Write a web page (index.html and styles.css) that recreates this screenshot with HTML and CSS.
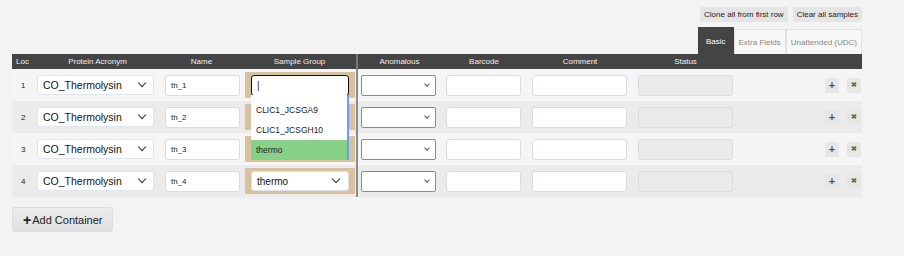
FILE: index.html
```html
<!DOCTYPE html>
<html lang="en">
<head>
  <meta charset="UTF-8">
  <title>Sample Changer</title>
  <link rel="stylesheet" href="styles.css">
</head>
<body>
  <div class="page">
    <div class="toolbar">
      <button class="small-btn">Clone all from first row</button>
      <button class="small-btn">Clear all samples</button>
    </div>

    <div class="tabs">
      <div class="tab active">Basic</div>
      <div class="tab">Extra Fields</div>
      <div class="tab">Unattended (UDC)</div>
    </div>

    <div class="sample-table">
      <div class="row head">
        <div class="cell loc">Loc</div>
        <div class="cell">Protein Acronym</div>
        <div class="cell">Name</div>
        <div class="cell">Sample Group</div>
        <div class="sep"></div>
        <div class="cell">Anomalous</div>
        <div class="cell">Barcode</div>
        <div class="cell">Comment</div>
        <div class="cell">Status</div>
        <div class="cell"></div>
      </div>

      <div class="row">
        <div class="cell loc">1</div>
        <div class="cell"><div class="protein">CO_Thermolysin<span class="chev"></span></div></div>
        <div class="cell"><div class="text-in">th_1</div></div>
        <div class="cell group">
          <div class="group-box"><div class="group-in focused"><span class="caret">|</span></div></div>
          <div class="dropdown">
            <div class="opt">CLIC1_JCSGA9</div>
            <div class="opt">CLIC1_JCSGH10</div>
            <div class="opt picked">thermo</div>
          </div>
        </div>
        <div class="sep"></div>
        <div class="cell"><div class="anom"><span class="chev small"></span></div></div>
        <div class="cell"><div class="text-in"></div></div>
        <div class="cell"><div class="text-in wide"></div></div>
        <div class="cell"><div class="text-in wide status"></div></div>
        <div class="cell actions"><span class="act">+</span><span class="act x">&#x2716;</span></div>
      </div>

      <div class="row alt">
        <div class="cell loc">2</div>
        <div class="cell"><div class="protein">CO_Thermolysin<span class="chev"></span></div></div>
        <div class="cell"><div class="text-in">th_2</div></div>
        <div class="cell group"><div class="group-box"></div></div>
        <div class="sep"></div>
        <div class="cell"><div class="anom"><span class="chev small"></span></div></div>
        <div class="cell"><div class="text-in"></div></div>
        <div class="cell"><div class="text-in wide"></div></div>
        <div class="cell"><div class="text-in wide status"></div></div>
        <div class="cell actions"><span class="act">+</span><span class="act x">&#x2716;</span></div>
      </div>

      <div class="row">
        <div class="cell loc">3</div>
        <div class="cell"><div class="protein">CO_Thermolysin<span class="chev"></span></div></div>
        <div class="cell"><div class="text-in">th_3</div></div>
        <div class="cell group"><div class="group-box"></div></div>
        <div class="sep"></div>
        <div class="cell"><div class="anom"><span class="chev small"></span></div></div>
        <div class="cell"><div class="text-in"></div></div>
        <div class="cell"><div class="text-in wide"></div></div>
        <div class="cell"><div class="text-in wide status"></div></div>
        <div class="cell actions"><span class="act">+</span><span class="act x">&#x2716;</span></div>
      </div>

      <div class="row alt">
        <div class="cell loc">4</div>
        <div class="cell"><div class="protein">CO_Thermolysin<span class="chev"></span></div></div>
        <div class="cell"><div class="text-in">th_4</div></div>
        <div class="cell group"><div class="group-box"><div class="group-in">thermo<span class="chev"></span></div></div></div>
        <div class="sep"></div>
        <div class="cell"><div class="anom"><span class="chev small"></span></div></div>
        <div class="cell"><div class="text-in"></div></div>
        <div class="cell"><div class="text-in wide"></div></div>
        <div class="cell"><div class="text-in wide status"></div></div>
        <div class="cell actions"><span class="act">+</span><span class="act x">&#x2716;</span></div>
      </div>
    </div>

    <button class="add-btn"><b>+</b>Add Container</button>
  </div>
</body>
</html>
```

FILE: styles.css
```css
body {
  margin: 0;
  background: #f3f3f3;
  font-family: "Liberation Sans", Arial, sans-serif;
  color: #222;
}

.page {
  width: 850px;
  padding: 7px 12px;
}

.toolbar {
  display: flex;
  justify-content: flex-end;
  gap: 5px;
  height: 20px;
}

.small-btn {
  height: 15px;
  padding: 0 4px;
  border: none;
  border-radius: 2px;
  background: #e4e4e4;
  font-family: inherit;
  font-size: 8px;
  color: #222;
}

.tabs {
  display: flex;
  justify-content: flex-end;
  height: 27px;
}

.tab {
  display: flex;
  align-items: center;
  padding: 0 4px;
  margin-top: 2px;
  font-size: 8px;
  color: #888;
  background: #f7f7f7;
  border: 1px solid #e2e2e2;
  border-bottom: none;
}

.tab.active {
  margin-top: 0;
  padding: 0 7px;
  background: #444;
  color: #fff;
  border-color: #444;
}

.row {
  display: grid;
  grid-template-columns: 23px 125px 83px 113px 2px 83px 86px 106px 105px 1fr;
  height: 32px;
  background: #f5f5f5;
}

.row.alt {
  background: #ebebeb;
}

.row.head {
  height: 15px;
  background: #444;
  color: #eee;
  font-size: 8px;
}

.head .cell {
  justify-content: center;
}

.head .cell.loc {
  justify-content: flex-start;
}

.cell {
  display: flex;
  align-items: center;
  position: relative;
}

.cell.loc {
  font-size: 8px;
}

.row .cell.loc {
  padding-left: 9px;
}

.row.head .cell.loc {
  padding-left: 4px;
}

.sep {
  background: #8a8a8a;
}

.head .sep {
  background: #777;
}

.protein {
  display: flex;
  align-items: center;
  justify-content: space-between;
  box-sizing: border-box;
  width: 117px;
  height: 20px;
  margin-left: 2px;
  padding: 0 8px 0 5px;
  background: #fff;
  border: 1px solid #e2e6ea;
  border-radius: 3px;
  font-size: 10.5px;
  color: #111;
}

.chev {
  width: 5px;
  height: 5px;
  border-right: 1.2px solid #333;
  border-bottom: 1.2px solid #333;
  transform: rotate(45deg);
  margin-top: -4px;
}

.chev.small {
  width: 3px;
  height: 3px;
  border-color: #555;
  border-width: 1px;
  margin-top: -2px;
}

.text-in {
  box-sizing: border-box;
  width: 75px;
  height: 21px;
  margin-left: 5px;
  padding-left: 5px;
  display: flex;
  align-items: center;
  background: #fff;
  border: 1px solid #d6dde5;
  border-radius: 3px;
  font-size: 8px;
}

.text-in.wide {
  width: 95px;
}

.text-in.status {
  background: #ebebeb;
}

.cell.group {
  padding-left: 2px;
}

.group-box {
  display: flex;
  align-items: center;
  box-sizing: border-box;
  width: 110px;
  height: 26px;
  padding: 0 6px;
  background: #d8c19f;
}

.group-in {
  display: flex;
  align-items: center;
  justify-content: space-between;
  box-sizing: border-box;
  width: 98px;
  height: 20px;
  padding: 0 9px 0 5px;
  background: #fff;
  border: 1px solid #e0e0e0;
  border-radius: 3px;
  font-size: 10px;
  color: #111;
}

.group-in.focused {
  height: 21px;
  border: 1.5px solid #111;
  font-weight: 300;
}

.caret {
  color: #333;
}

.dropdown {
  position: absolute;
  left: 8px;
  top: 26px;
  z-index: 2;
  box-sizing: border-box;
  width: 98px;
  padding-top: 5px;
  background: #fff;
  border-right: 2px solid #6b9ef0;
  font-size: 8.5px;
}

.opt {
  height: 20px;
  line-height: 20px;
  padding-left: 5px;
}

.opt.picked {
  background: #87d087;
}

.anom {
  display: flex;
  align-items: center;
  justify-content: flex-end;
  box-sizing: border-box;
  width: 75px;
  height: 21px;
  margin-left: 3px;
  padding-right: 6px;
  background: #fff;
  border: 1px solid #8a8a8a;
  border-radius: 2px;
}

.actions {
  justify-content: flex-end;
  gap: 8px;
  padding-right: 1px;
}

.act {
  display: flex;
  align-items: center;
  justify-content: center;
  width: 14px;
  height: 15px;
  background: #e6e6e6;
  border-radius: 2px;
  font-size: 11px;
  font-weight: bold;
  color: #555;
}

.act.x {
  font-size: 7px;
  color: #666;
}

.add-btn {
  display: flex;
  align-items: center;
  gap: 1px;
  margin-top: 10px;
  width: 101px;
  height: 25px;
  padding: 0 0 0 10px;
  border: 1px solid #ddd;
  border-radius: 3px;
  background: linear-gradient(#ececec, #dedede);
  font-family: inherit;
  font-size: 11px;
  color: #222;
  white-space: nowrap;
}

.add-btn b {
  font-size: 14px;
  line-height: 1;
}
```
